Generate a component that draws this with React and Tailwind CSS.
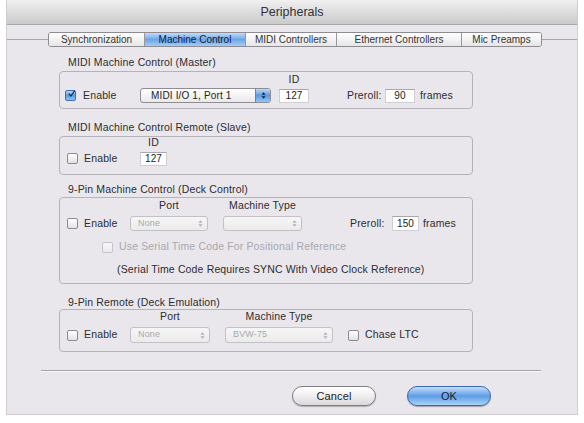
import React from "react";

function Checkbox({ checked = false, disabled = false }) {
  if (checked) {
    return (
      <span className="flex h-[11px] w-[11px] shrink-0 items-center justify-center rounded-[2px] border border-[#3d6db5] bg-gradient-to-b from-[#b5d5f7] via-[#5c9be3] to-[#8cc2f5]">
        <svg viewBox="0 0 12 12" className="-mt-[3px] ml-[2px] h-[12px] w-[12px]">
          <path d="M2 6 L5 9.5 L11 1" fill="none" stroke="#1c2b4d" strokeWidth="2" strokeLinecap="round" strokeLinejoin="round" />
        </svg>
      </span>
    );
  }
  return (
    <span
      className={
        disabled
          ? "block h-[11px] w-[11px] shrink-0 rounded-[2px] border border-[#c6c4c9] bg-gradient-to-b from-[#f7f7f7] to-[#ebebeb]"
          : "block h-[11px] w-[11px] shrink-0 rounded-[2px] border border-[#8c8a90] bg-gradient-to-b from-white to-[#e2e2e2]"
      }
    />
  );
}

function Arrows({ color }) {
  return (
    <svg viewBox="0 0 6 10" className="h-[9px] w-[5px]">
      <path d="M0.5 4 L3 1 L5.5 4 Z" fill={color} />
      <path d="M0.5 6 L3 9 L5.5 6 Z" fill={color} />
    </svg>
  );
}

function Popup({ className, label = "", active = false }) {
  if (active) {
    return (
      <div className={"flex overflow-hidden rounded-[3px] border border-[#8f8d93] bg-gradient-to-b from-white to-[#e9e9e9] " + className}>
        <span className="flex-1 truncate pl-[10px] text-[10px] leading-[14px] text-[#222]">{label}</span>
        <span className="flex w-[15px] items-center justify-center border-l border-[#5c86c0] bg-gradient-to-b from-[#bcd9f7] via-[#5b9ae2] to-[#92c6f6]">
          <Arrows color="#16223d" />
        </span>
      </div>
    );
  }
  return (
    <div className={"flex items-center rounded-[3px] border border-[#c3c1c7] bg-gradient-to-b from-[#f6f6f6] to-[#ebebeb] " + className}>
      <span className="flex-1 truncate pl-[7px] text-[9px] text-[#a9a7ad]">{label}</span>
      <span className="flex w-[13px] items-center justify-center">
        <Arrows color="#b0aeb4" />
      </span>
    </div>
  );
}

function Field({ value, className }) {
  return (
    <div className={"flex items-center justify-center border border-[#d0ced3] border-t-[#a9a7ad] bg-white text-[10px] text-[#222] " + className}>
      {value}
    </div>
  );
}

const tabs = [
  { name: "Synchronization", w: "w-[95px]" },
  { name: "Machine Control", w: "w-[101px]", active: true },
  { name: "MIDI Controllers", w: "w-[91px]" },
  { name: "Ethernet Controllers", w: "w-[125px]" },
  { name: "Mic Preamps", w: "w-[80px]" },
];

export default function App() {
  return (
    <div className="h-[423px] w-[584px] overflow-hidden bg-white font-['Liberation_Sans',Arial,sans-serif] text-[10.5px] tracking-[0.15px] text-[#2e2c31]">
      <div className="ml-[6px] flex h-[415px] w-[572px] flex-col border-x border-b border-[#cfcdd2] bg-[#e9e7eb]">
        {/* title bar */}
        <div className="flex h-[25px] shrink-0 items-center justify-center border-b border-[#a8a8a8] bg-gradient-to-b from-[#f0f0f0] to-[#cacaca] text-[12.5px] tracking-normal text-[#333]">
          Peripherals
        </div>

        {/* tab strip */}
        <div className="mt-[7px] flex h-[15px] items-center">
          <div className="h-px w-[41px] bg-[#a6a4a9]" />
          <div className="flex h-[15px] overflow-hidden rounded-[3px] border border-[#8e8c91]">
            {tabs.map((t, i) => (
              <div
                key={t.name}
                className={
                  (t.active
                    ? "bg-gradient-to-b from-[#c2dcf7] via-[#6da6e6] to-[#a2cef8] text-[#10203a] "
                    : "bg-gradient-to-b from-white to-[#e6e6e6] text-[#333] ") +
                  (i > 0 ? "border-l border-[#9a989d] " : "") +
                  "flex items-center justify-center text-[10px] tracking-normal " +
                  t.w
                }
              >
                {t.name}
              </div>
            ))}
          </div>
          <div className="h-px flex-1 bg-[#a6a4a9]" />
        </div>

        {/* MIDI Machine Control (Master) */}
        <div className="mt-[9px] h-[12px] pl-[61px] leading-[12px]">MIDI Machine Control (Master)</div>
        <div className="ml-[52px] mt-[3px] h-[38px] w-[414px] rounded-[4px] border border-[#b5b3b9]">
          <div className="mt-[1px] flex h-[12px] leading-[12px]">
            <div className="ml-[219px] w-[30px] text-center">ID</div>
          </div>
          <div className="mt-[3px] flex h-[15px] items-center">
            <div className="ml-[5px]">
              <Checkbox checked />
            </div>
            <span className="ml-[7px] w-[57px]">Enable</span>
            <Popup className="h-[15px] w-[131px]" label="MIDI I/O 1, Port 1" active />
            <Field value="127" className="ml-[8px] h-[14px] w-[30px]" />
            <span className="ml-[38px] w-[38px]">Preroll:</span>
            <Field value="90" className="h-[14px] w-[30px]" />
            <span className="ml-[5px]">frames</span>
          </div>
        </div>

        {/* MIDI Machine Control Remote (Slave) */}
        <div className="mt-[12px] h-[12px] pl-[61px] leading-[12px]">MIDI Machine Control Remote (Slave)</div>
        <div className="ml-[52px] mt-[3px] h-[39px] w-[414px] rounded-[4px] border border-[#b5b3b9]">
          <div className="flex h-[10px] leading-[10px]">
            <div className="ml-[80px] w-[27px] text-center">ID</div>
          </div>
          <div className="mt-[4px] flex h-[15px] items-center">
            <div className="ml-[7px]">
              <Checkbox />
            </div>
            <span className="ml-[6px] w-[56px]">Enable</span>
            <Field value="127" className="h-[14px] w-[27px]" />
          </div>
        </div>

        {/* 9-Pin Machine Control (Deck Control) */}
        <div className="mt-[8px] h-[12px] pl-[61px] leading-[12px]">9-Pin Machine Control (Deck Control)</div>
        <div className="ml-[52px] mt-[2px] h-[87px] w-[414px] rounded-[4px] border border-[#b5b3b9]">
          <div className="mt-[1px] flex h-[12px] leading-[12px]">
            <div className="ml-[70px] w-[78px] text-center">Port</div>
            <div className="ml-[15px] w-[79px] text-center">Machine Type</div>
          </div>
          <div className="mt-[5px] flex h-[15px] items-center">
            <div className="ml-[7px]">
              <Checkbox />
            </div>
            <span className="ml-[6px] w-[46px]">Enable</span>
            <Popup className="h-[15px] w-[78px]" label="None" />
            <Popup className="ml-[15px] h-[15px] w-[79px]" />
            <span className="ml-[48px] w-[42px]">Preroll:</span>
            <Field value="150" className="h-[15px] w-[27px]" />
            <span className="ml-[4px]">frames</span>
          </div>
          <div className="mt-[9px] flex h-[14px] items-center">
            <div className="ml-[42px]">
              <Checkbox disabled />
            </div>
            <span className="ml-[6px] text-[#aaa8ae]">Use Serial Time Code For Positional Reference</span>
          </div>
          <div className="mt-[8px] h-[14px] pl-[57px] leading-[14px]">
            (Serial Time Code Requires SYNC With Video Clock Reference)
          </div>
        </div>

        {/* 9-Pin Remote (Deck Emulation) */}
        <div className="mt-[12px] h-[12px] pl-[61px] leading-[12px]">9-Pin Remote (Deck Emulation)</div>
        <div className="ml-[52px] mt-[1px] h-[43px] w-[414px] rounded-[4px] border border-[#b5b3b9]">
          <div className="flex h-[12px] leading-[12px]">
            <div className="ml-[70px] w-[80px] text-center">Port</div>
            <div className="ml-[15px] w-[108px] text-center">Machine Type</div>
          </div>
          <div className="mt-[5px] flex h-[16px] items-center">
            <div className="ml-[7px]">
              <Checkbox />
            </div>
            <span className="ml-[6px] w-[46px]">Enable</span>
            <Popup className="h-[16px] w-[80px]" label="None" />
            <Popup className="ml-[15px] h-[16px] w-[108px]" label="BVW-75" />
            <div className="ml-[15px]">
              <Checkbox />
            </div>
            <span className="ml-[6px]">Chase LTC</span>
          </div>
        </div>

        {/* separator */}
        <div className="ml-[34px] mt-[18px] h-[2px] w-[500px] border-t border-b border-t-[#a3a1a6] border-b-[#f7f7f8]" />

        {/* buttons */}
        <div className="mt-[14px] flex h-[20px]">
          <button className="ml-[285px] h-[20px] w-[84px] rounded-full border border-[#7f7d83] bg-gradient-to-b from-white via-[#efefef] to-[#d9d9d9] text-[11px] text-[#222] shadow-[0_1px_1px_rgba(0,0,0,0.25)]">
            Cancel
          </button>
          <button className="ml-[31px] h-[20px] w-[84px] rounded-full border border-[#3b68ad] bg-gradient-to-b from-[#c5defa] via-[#5e9ce4] to-[#a9d4fb] text-[11px] text-[#0f1e38] shadow-[0_1px_1px_rgba(0,0,0,0.3)]">
            OK
          </button>
        </div>
      </div>
    </div>
  );
}
